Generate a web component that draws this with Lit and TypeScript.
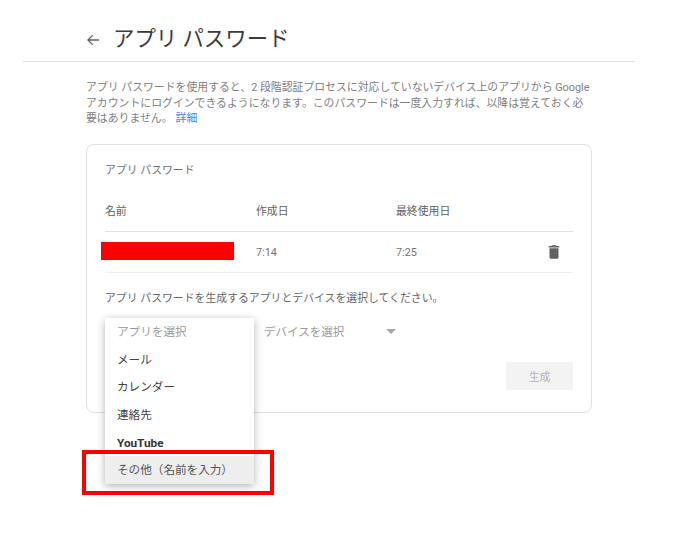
import { LitElement, html, css } from 'lit';
import { customElement } from 'lit/decorators.js';

@customElement('app-root')
export class AppRoot extends LitElement {
  static styles = css`
    :host {
      display: block;
      position: relative;
      height: 535px;
      background: #fff;
      overflow: hidden;
      font-family: Roboto, 'Noto Sans CJK JP', sans-serif;
      color: #757575;
      font-size: 10.87px;
    }
    .page {
      width: 612px;
      margin-left: 23px;
    }
    .header {
      display: flex;
      align-items: center;
      height: 45px;
      padding: 16px 0 0 62px;
      border-bottom: 1px solid #e0e0e0;
    }
    .back {
      width: 16px;
      height: 16px;
      margin-right: 13px;
      margin-top: 3px;
      fill: #616161;
    }
    h1 {
      margin: 0 0 0 -1px;
      font-size: 21.4px;
      font-weight: 400;
      color: #3c3c3c;
      line-height: 30px;
    }
    .intro {
      margin: 18px 0 0 63px;
      width: 506px;
      line-height: 15.6px;
      color: #808080;
    }
    .intro a {
      color: #4285f4;
      text-decoration: none;
      margin-left: 3px;
    }
    .card {
      margin: 17px 0 0 63px;
      width: 506px;
      height: 269px;
      box-sizing: border-box;
      border: 1px solid #e0e0e0;
      border-radius: 8px;
      padding: 18px 18px 0;
    }
    .card-title {
      line-height: 16px;
      color: #6f6f6f;
    }
    .row {
      display: grid;
      grid-template-columns: 151px 140px 1fr 26px;
      align-items: center;
    }
    .head {
      margin-top: 11px;
      height: 41px;
      border-bottom: 1px solid #e0e0e0;
      color: #5f5f5f;
    }
    .body {
      height: 40px;
      box-sizing: content-box;
      border-bottom: 1px solid #eeeeee;
      color: #757575;
    }
    .body span {
      margin-top: 2px;
    }
    .mask {
      width: 133px;
      height: 18px;
      margin: 0 0 1px -4px;
      background: #ff0000;
    }
    .trash {
      width: 18px;
      height: 18px;
      fill: #616161;
      margin-left: -2px;
    }
    .pick {
      margin-top: 18px;
      line-height: 16px;
      color: #666;
    }
    .selects {
      display: flex;
      align-items: center;
      margin: 17px 0 0 159px;
      font-size: 11.5px;
      color: #9a9a9a;
      line-height: 16px;
    }
    .arrow {
      width: 0;
      height: 0;
      margin-left: 42px;
      border-left: 5px solid transparent;
      border-right: 5px solid transparent;
      border-top: 5px solid #a8a8a8;
    }
    .actions {
      display: flex;
      justify-content: flex-end;
      margin-top: 22px;
    }
    .gen {
      width: 67px;
      height: 28px;
      border: 0;
      padding: 0;
      border-radius: 2px;
      background: #f3f3f3;
      color: #b4b4b4;
      font: inherit;
    }
    .menu {
      position: absolute;
      left: 105px;
      top: 318px;
      width: 149px;
      height: 166px;
      background: #fff;
      box-shadow: 0 2px 8px rgba(0, 0, 0, 0.3);
      font-size: 11.6px;
      color: #424242;
    }
    .menu div {
      height: 27.7px;
      line-height: 28.5px;
      padding-left: 12px;
    }
    .menu .placeholder {
      color: #9a9a9a;
    }
    .menu .yt {
      font-weight: 700;
      font-size: 11.75px;
      color: #333;
    }
    .menu .active {
      background: #eeeeee;
      color: #555;
    }
    .callout {
      position: absolute;
      left: 82px;
      top: 450px;
      width: 192px;
      height: 45px;
      box-sizing: border-box;
      border: 4px solid #ff0000;
    }
  `;

  render() {
    return html`
      <div class="page">
        <div class="header">
          <svg class="back" viewBox="0 0 24 24">
            <path d="M21 11H6.83l5.58-5.59L11 4l-8 8 8 8 1.41-1.41L6.83 13H21z" />
          </svg>
          <h1>アプリ パスワード</h1>
        </div>
        <p class="intro">
          アプリ パスワードを使用すると、2 段階認証プロセスに対応していないデバイス上のアプリから Google アカウントにログインできるようになります。このパスワードは一度入力すれば、以降は覚えておく必要はありません。<a href="#">詳細</a>
        </p>
        <div class="card">
          <div class="card-title">アプリ パスワード</div>
          <div class="row head">
            <span>名前</span><span>作成日</span><span>最終使用日</span><span></span>
          </div>
          <div class="row body">
            <div class="mask"></div>
            <span>7:14</span>
            <span>7:25</span>
            <svg class="trash" viewBox="0 0 24 24">
              <path d="M6 19c0 1.1.9 2 2 2h8c1.1 0 2-.9 2-2V7H6v12zM19 4h-3.5l-1-1h-5l-1 1H5v2h14V4z" />
            </svg>
          </div>
          <div class="pick">アプリ パスワードを生成するアプリとデバイスを選択してください。</div>
          <div class="selects">
            <span>デバイスを選択</span>
            <span class="arrow"></span>
          </div>
          <div class="actions"><button class="gen">生成</button></div>
        </div>
      </div>
      <div class="menu">
        <div class="placeholder">アプリを選択</div>
        <div>メール</div>
        <div>カレンダー</div>
        <div>連絡先</div>
        <div class="yt">YouTube</div>
        <div class="active">その他（名前を入力）</div>
      </div>
      <div class="callout"></div>
    `;
  }
}
